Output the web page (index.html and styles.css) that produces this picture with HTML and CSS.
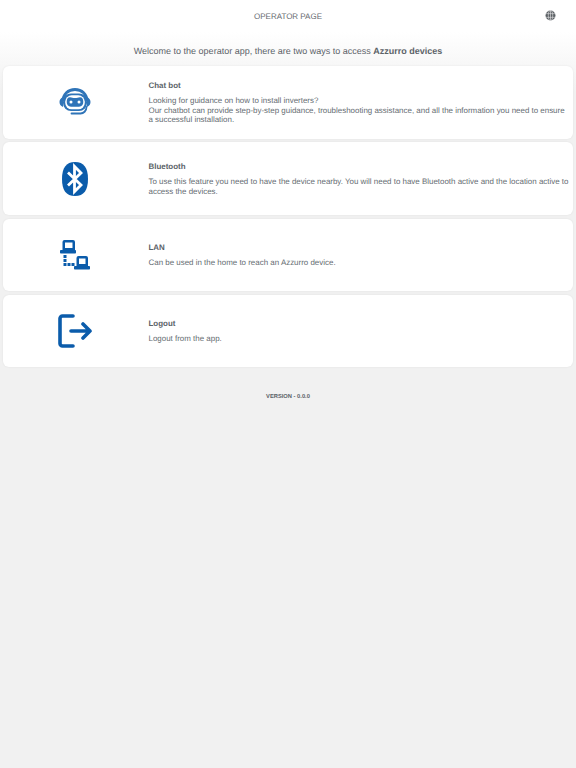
FILE: index.html
```html
<!DOCTYPE html>
<html lang="en">
<head>
<meta charset="utf-8">
<title>Operator page</title>
<link rel="stylesheet" href="styles.css">
</head>
<body>
<header class="topbar">
  <h1 class="topbar-title">OPERATOR PAGE</h1>
  <svg class="globe" viewBox="0 0 12 12" width="11" height="11">
    <circle cx="6" cy="6" r="5.4" fill="#5b6064"/>
    <g fill="none" stroke="#dfe0e1" stroke-width=".7">
      <ellipse cx="6" cy="6" rx="2.4" ry="5.4"/>
      <path d="M6 .6v10.8M.8 4h10.4M.8 8h10.4"/>
    </g>
  </svg>
</header>
<main class="content">
  <p class="intro">Welcome to the operator app, there are two ways to access <b>Azzurro devices</b></p>
  <section class="card">
    <div class="card-icon">
      <svg viewBox="0 0 32 28" width="32" height="28" fill="none">
        <path d="M4 13C4 6.500 9 1.500 16 1.500S28 6.500 28 13" stroke="#2f74b8" stroke-width="2.800"/>
        <rect x="4" y="5.500" width="24" height="17.500" rx="8" fill="#2f74b8"/>
        <rect x="6.200" y="7.300" width="19.600" height="14" rx="6.500" fill="#fff"/>
        <path d="M11 9.300c1.800 0 3 .8 5 .8s3.200-.8 5-.8c2.300 0 3.300 2 3.300 4.700s-1.300 4.700-4.300 4.700h-8c-3 0-4.300-2-4.300-4.700s1-4.700 3.300-4.700z" fill="#2f74b8"/>
        <circle cx="12" cy="14" r="1.500" fill="#fff"/>
        <circle cx="20" cy="14" r="1.500" fill="#fff"/>
        <path d="M4 9C1.500 10 .5 12 .5 14s1 4 3.500 5zM28 9c2.500 1 3.500 3 3.500 5s-1 4-3.500 5z" fill="#2f74b8"/>
        <path d="M27.500 19c0 4-3 6.500-6 6.500h-9" stroke="#2f74b8" stroke-width="1.800" stroke-linecap="round"/>
      </svg>
    </div>
    <div class="card-body">
      <h2 class="card-title">Chat bot</h2>
      <p class="card-text">Looking for guidance on how to install inverters?<br>Our chatbot can provide step-by-step guidance, troubleshooting assistance, and all the information you need to ensure a successful installation.</p>
    </div>
  </section>
  <section class="card">
    <div class="card-icon">
      <svg viewBox="0 0 26 34" width="26" height="34">
        <path d="M13 0C4 0 0 6 0 17s4 17 13 17 13-6 13-17S22 0 13 0z" fill="#0b5cab"/>
        <path d="M6 10.500 19 23l-6.500 6.500v-25L19 11 6 23.500" fill="none" stroke="#fff" stroke-width="2.800"/>
      </svg>
    </div>
    <div class="card-body">
      <h2 class="card-title">Bluetooth</h2>
      <p class="card-text">To use this feature you need to have the device nearby. You will need to have Bluetooth active and the location active to access the devices.</p>
    </div>
  </section>
  <section class="card">
    <div class="card-icon">
      <svg viewBox="0 0 30 30" width="30" height="30" fill="#0b5cab">
        <path d="M2.500 2a2 2 0 0 1 2-2h8.500a2 2 0 0 1 2 2v8.500h-12.500zM5 2.500v5.500h7.500V2.500z" fill-rule="evenodd"/>
        <rect x="0" y="10" width="16" height="3.500" rx=".8"/>
        <path d="M16.500 18a2 2 0 0 1 2-2h7.500a2 2 0 0 1 2 2v8.500h-11.500zM19 18.500v5.500h6.500v-5.500z" fill-rule="evenodd"/>
        <rect x="14" y="26" width="16" height="3.500" rx=".8"/>
        <rect x="3.500" y="15" width="3" height="3"/>
        <rect x="3.500" y="19" width="3" height="3"/>
        <rect x="3.500" y="23" width="3" height="3"/>
        <rect x="7.500" y="23" width="3" height="3"/>
        <rect x="11.500" y="23" width="3" height="3"/>
      </svg>
    </div>
    <div class="card-body">
      <h2 class="card-title">LAN</h2>
      <p class="card-text">Can be used in the home to reach an Azzurro device.</p>
    </div>
  </section>
  <section class="card">
    <div class="card-icon">
      <svg viewBox="0 0 34 34" width="34" height="34" fill="none" stroke="#0b5cab" stroke-width="3.600" stroke-linecap="round" stroke-linejoin="round">
        <path d="M15 2H4.500A2.500 2.500 0 0 0 2 4.500v25A2.500 2.500 0 0 0 4.500 32H15"/>
        <path d="M13 17h19M25 10l7 7-7 7"/>
      </svg>
    </div>
    <div class="card-body">
      <h2 class="card-title">Logout</h2>
      <p class="card-text">Logout from the app.</p>
    </div>
  </section>
  <p class="version">VERSION - 0.0.0</p>
</main>
</body>
</html>
```
FILE: styles.css
```css
* { box-sizing: border-box; }
html, body { margin: 0; height: 100%; }
body {
  background: #f1f1f1;
  font-family: "Liberation Sans", Arial, sans-serif;
  color: #5b6268;
  text-rendering: geometricPrecision;
}
.topbar {
  height: 32px;
  background: #fff;
  display: flex;
  align-items: center;
  justify-content: center;
  position: relative;
}
.topbar-title {
  margin: 0;
  font-size: 8px;
  font-weight: 400;
  color: #666b70;
}
.globe { position: absolute; right: 20px; top: 10px; }
.content {
  background: linear-gradient(#fff 0, #f1f1f1 60px);
  padding: 0 3px;
}
.intro {
  margin: 0;
  height: 34px;
  padding-top: 13px;
  text-align: center;
  font-size: 9px;
  line-height: 12px;
}
.card {
  height: 72.500px;
  margin-bottom: 3.800px;
  background: #fff;
  border-radius: 6px;
  box-shadow: 0 0 2px rgba(0,0,0,.08);
  display: flex;
  align-items: center;
}
.card-icon {
  width: 143px;
  flex: none;
  display: flex;
  justify-content: center;
}
.card-body { flex: 1; min-width: 0; padding: 1px 3px 0 2.500px; }
.card-title {
  margin: 0 0 5px;
  font-size: 7.950px;
  line-height: 10px;
  font-weight: 700;
}
.card-text {
  margin: 0;
  font-size: 7.950px;
  line-height: 9.500px;
  color: #656c72;
}
.version {
  margin: 26px 0 0;
  text-align: center;
  font-size: 5.750px;
  font-weight: 700;
  line-height: 8px;
}
```
